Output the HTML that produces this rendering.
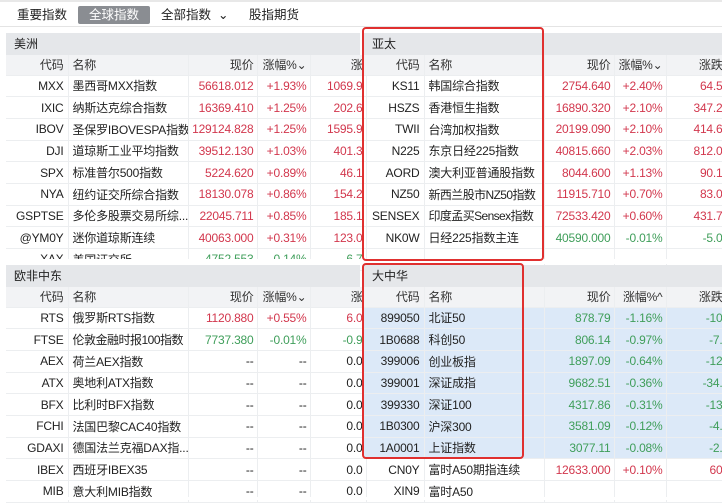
<!DOCTYPE html><html><head><meta charset="utf-8"><style>
*{margin:0;padding:0;box-sizing:border-box}
body{width:722px;height:500px;overflow:hidden;background:#fff;font-family:"Liberation Sans","Noto Sans CJK SC",sans-serif;font-size:12px;color:#222;position:relative}
.tabs{position:absolute;left:0;top:0;width:722px;height:27px;border-bottom:1px solid #e4e4e4;border-top:2px solid #e8e8e8}
.tab{position:absolute;top:4px;height:18px;line-height:18px;font-size:12.5px}
.sel{background:#8a8d92;color:#fff;border-radius:2px;padding:0 11px}
table{position:absolute;border-collapse:collapse;table-layout:fixed}
td{height:21.7px;padding:0 4px;white-space:nowrap;overflow:hidden;border-bottom:1px solid #eceef0;border-right:1px solid #eceef0;letter-spacing:-0.2px}
td.c{text-align:right}
td.p{text-align:right;padding:0 3px}
.r{color:#d2374d}.gr{color:#3f9e5a}
tr.h td{background:#f2f3f5;color:#333;height:20px}
.sec{position:absolute;height:22px;line-height:22px;background:#e5e7ea;padding-left:8px;font-size:12px}
.bl td{background:#dce9f8}
.box{position:absolute;border:2px solid #e0302f;border-radius:4px}
</style></head><body>
<div class="tabs">
<span class="tab" style="left:17px">重要指数</span>
<span class="tab sel" style="left:78px">全球指数</span>
<span class="tab" style="left:161px">全部指数 &nbsp;⌄</span>
<span class="tab" style="left:249px">股指期货</span>
</div>

<div class="sec" style="left:6px;top:33px;width:354px">美洲</div>
<table style="left:6px;top:55px;width:360px">
<colgroup><col style="width:62px"><col style="width:120px"><col style="width:69px"><col style="width:53px"><col style="width:56px"></colgroup>
<tr class="h"><td class="c">代码</td><td>名称</td><td class="p">现价</td><td class="p">涨幅%⌄</td><td class="p">涨</td></tr>
<tr><td class="c">MXX</td><td>墨西哥MXX指数</td><td class="p r">56618.012</td><td class="p r">+1.93%</td><td class="p r">1069.9</td></tr>
<tr><td class="c">IXIC</td><td>纳斯达克综合指数</td><td class="p r">16369.410</td><td class="p r">+1.25%</td><td class="p r">202.6</td></tr>
<tr><td class="c">IBOV</td><td>圣保罗IBOVESPA指数</td><td class="p r">129124.828</td><td class="p r">+1.25%</td><td class="p r">1595.9</td></tr>
<tr><td class="c">DJI</td><td>道琼斯工业平均指数</td><td class="p r">39512.130</td><td class="p r">+1.03%</td><td class="p r">401.3</td></tr>
<tr><td class="c">SPX</td><td>标准普尔500指数</td><td class="p r">5224.620</td><td class="p r">+0.89%</td><td class="p r">46.1</td></tr>
<tr><td class="c">NYA</td><td>纽约证交所综合指数</td><td class="p r">18130.078</td><td class="p r">+0.86%</td><td class="p r">154.2</td></tr>
<tr><td class="c">GSPTSE</td><td>多伦多股票交易所综...</td><td class="p r">22045.711</td><td class="p r">+0.85%</td><td class="p r">185.1</td></tr>
<tr><td class="c">@YM0Y</td><td>迷你道琼斯连续</td><td class="p r">40063.000</td><td class="p r">+0.31%</td><td class="p r">123.0</td></tr>
<tr><td class="c">XAX</td><td>美国证交所</td><td class="p gr">4752.553</td><td class="p gr">-0.14%</td><td class="p gr">-6.7</td></tr>
</table>
<div style="position:absolute;left:0;top:262px;width:722px;height:3px;background:#fff"></div>

<div class="sec" style="left:364px;top:33px;width:358px">亚太</div>
<table style="left:364px;top:55px;width:362px">
<colgroup><col style="width:60px"><col style="width:120px"><col style="width:70px"><col style="width:52px"><col style="width:60px"></colgroup>
<tr class="h"><td class="c">代码</td><td>名称</td><td class="p">现价</td><td class="p">涨幅%⌄</td><td class="p">涨跌</td></tr>
<tr><td class="c">KS11</td><td>韩国综合指数</td><td class="p r">2754.640</td><td class="p r">+2.40%</td><td class="p r">64.5</td></tr>
<tr><td class="c">HSZS</td><td>香港恒生指数</td><td class="p r">16890.320</td><td class="p r">+2.10%</td><td class="p r">347.2</td></tr>
<tr><td class="c">TWII</td><td>台湾加权指数</td><td class="p r">20199.090</td><td class="p r">+2.10%</td><td class="p r">414.6</td></tr>
<tr><td class="c">N225</td><td>东京日经225指数</td><td class="p r">40815.660</td><td class="p r">+2.03%</td><td class="p r">812.0</td></tr>
<tr><td class="c">AORD</td><td>澳大利亚普通股指数</td><td class="p r">8044.600</td><td class="p r">+1.13%</td><td class="p r">90.1</td></tr>
<tr><td class="c">NZ50</td><td style="letter-spacing:-0.6px">新西兰股市NZ50指数</td><td class="p r">11915.710</td><td class="p r">+0.70%</td><td class="p r">83.0</td></tr>
<tr><td class="c">SENSEX</td><td style="letter-spacing:-0.6px">印度孟买Sensex指数</td><td class="p r">72533.420</td><td class="p r">+0.60%</td><td class="p r">431.7</td></tr>
<tr><td class="c">NK0W</td><td>日经225指数主连</td><td class="p gr">40590.000</td><td class="p gr">-0.01%</td><td class="p gr">-5.0</td></tr>
<tr><td></td><td></td><td></td><td></td><td></td></tr>
</table>
<div style="position:absolute;left:0;top:259px;width:722px;height:5px;background:#fff"></div>

<div class="sec" style="left:6px;top:265px;width:354px">欧非中东</div>
<table style="left:6px;top:287px;width:360px">
<colgroup><col style="width:62px"><col style="width:120px"><col style="width:69px"><col style="width:53px"><col style="width:56px"></colgroup>
<tr class="h"><td class="c">代码</td><td>名称</td><td class="p">现价</td><td class="p">涨幅%⌄</td><td class="p">涨</td></tr>
<tr><td class="c">RTS</td><td>俄罗斯RTS指数</td><td class="p r">1120.880</td><td class="p r">+0.55%</td><td class="p r">6.0</td></tr>
<tr><td class="c">FTSE</td><td style="letter-spacing:-0.5px">伦敦金融时报100指数</td><td class="p gr">7737.380</td><td class="p gr">-0.01%</td><td class="p gr">-0.9</td></tr>
<tr><td class="c">AEX</td><td>荷兰AEX指数</td><td class="p">--</td><td class="p">--</td><td class="p">0.0</td></tr>
<tr><td class="c">ATX</td><td>奥地利ATX指数</td><td class="p">--</td><td class="p">--</td><td class="p">0.0</td></tr>
<tr><td class="c">BFX</td><td>比利时BFX指数</td><td class="p">--</td><td class="p">--</td><td class="p">0.0</td></tr>
<tr><td class="c">FCHI</td><td>法国巴黎CAC40指数</td><td class="p">--</td><td class="p">--</td><td class="p">0.0</td></tr>
<tr><td class="c">GDAXI</td><td>德国法兰克福DAX指...</td><td class="p">--</td><td class="p">--</td><td class="p">0.0</td></tr>
<tr><td class="c">IBEX</td><td>西班牙IBEX35</td><td class="p">--</td><td class="p">--</td><td class="p">0.0</td></tr>
<tr><td class="c">MIB</td><td>意大利MIB指数</td><td class="p">--</td><td class="p">--</td><td class="p">0.0</td></tr>
</table>

<div class="sec" style="left:364px;top:265px;width:358px">大中华</div>
<table style="left:364px;top:287px;width:362px">
<colgroup><col style="width:60px"><col style="width:120px"><col style="width:70px"><col style="width:52px"><col style="width:60px"></colgroup>
<tr class="h"><td class="c">代码</td><td>名称</td><td class="p">现价</td><td class="p">涨幅%^</td><td class="p">涨跌</td></tr>
<tr class="bl"><td class="c">899050</td><td>北证50</td><td class="p gr">878.79</td><td class="p gr">-1.16%</td><td class="p gr">-10</td></tr>
<tr class="bl"><td class="c">1B0688</td><td>科创50</td><td class="p gr">806.14</td><td class="p gr">-0.97%</td><td class="p gr">-7.</td></tr>
<tr class="bl"><td class="c">399006</td><td>创业板指</td><td class="p gr">1897.09</td><td class="p gr">-0.64%</td><td class="p gr">-12</td></tr>
<tr class="bl"><td class="c">399001</td><td>深证成指</td><td class="p gr">9682.51</td><td class="p gr">-0.36%</td><td class="p gr">-34.</td></tr>
<tr class="bl"><td class="c">399330</td><td>深证100</td><td class="p gr">4317.86</td><td class="p gr">-0.31%</td><td class="p gr">-13</td></tr>
<tr class="bl"><td class="c">1B0300</td><td>沪深300</td><td class="p gr">3581.09</td><td class="p gr">-0.12%</td><td class="p gr">-4.</td></tr>
<tr class="bl"><td class="c">1A0001</td><td>上证指数</td><td class="p gr">3077.11</td><td class="p gr">-0.08%</td><td class="p gr">-2.</td></tr>
<tr><td class="c">CN0Y</td><td>富时A50期指连续</td><td class="p r">12633.000</td><td class="p r">+0.10%</td><td class="p r">60</td></tr>
<tr><td class="c">XIN9</td><td>富时A50</td><td class="p"></td><td class="p"></td><td class="p"></td></tr>
</table>

<div class="box" style="left:362px;top:27px;width:182px;height:234px"></div>
<div class="box" style="left:362px;top:263px;width:162px;height:196px"></div>
<div style="position:absolute;left:0;top:497px;width:722px;height:3px;background:#fff"></div>
</body></html>
